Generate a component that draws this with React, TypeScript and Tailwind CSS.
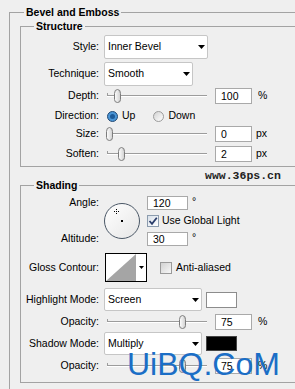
import { ReactNode } from 'react';

function Label({ children }: { children?: ReactNode }) {
  return <div className="w-[78px] mr-[5px] shrink-0 text-right">{children}</div>;
}

function Select({ value, width }: { value: string; width: string }) {
  return (
    <div
      className={`${width} h-full flex items-center justify-between bg-white border border-[#c6c6c6] rounded-[2px] pl-[3px] pr-[2px]`}
    >
      <span>{value}</span>
      <svg width="7" height="4" viewBox="0 0 7 4">
        <path d="M0 0h7L3.5 4z" fill="#000" />
      </svg>
    </div>
  );
}

function Field({ value, small }: { value: string; small?: boolean }) {
  return (
    <div
      className={
        small
          ? 'w-[41px] h-[14px] flex items-center bg-white border border-[#a9a9a9] pl-[5px] leading-none'
          : 'w-[37px] h-[16px] flex items-center bg-white border border-[#a9a9a9] pl-[5px] leading-none'
      }
    >
      {value}
    </div>
  );
}

function Slider({ pos }: { pos: number }) {
  return (
    <div className="relative ml-[1px] w-[102px] h-full">
      <div className="absolute left-[2px] right-0 top-[7px] h-[2px] border-t border-[#9c9c9c] border-b border-b-white" />
      <div className="absolute left-[2px] top-[5px] h-[3px] border-l border-[#9c9c9c]" />
      <svg
        className="absolute top-[1px]"
        style={{ left: pos }}
        width="9"
        height="14"
        viewBox="0 0 9 14"
      >
        <defs>
          <linearGradient id={`g${pos}`} x1="0" y1="0" x2="1" y2="0">
            <stop offset="0" stopColor="#ffffff" />
            <stop offset="1" stopColor="#cfcfcf" />
          </linearGradient>
        </defs>
        <path
          d="M1.5 4.5Q1.5 0.5 4.5 0.5Q7.5 0.5 7.5 4.5V10.5Q7.5 13.5 4.5 13.5Q1.5 13.5 1.5 10.5Z"
          fill={`url(#g${pos})`}
          stroke="#7c7c7c"
        />
      </svg>
    </div>
  );
}

function Legend({ children, outer }: { children: ReactNode; outer?: boolean }) {
  return (
    <legend
      className={
        outer
          ? 'ml-[14px] px-[2px] font-bold leading-[14px]'
          : 'ml-[13px] px-[2px] font-bold leading-[14px]'
      }
    >
      {children}
    </legend>
  );
}

export default function App() {
  return (
    <div className="relative w-[295px] h-[389px] overflow-hidden bg-[#efefef] text-[10.5px] text-black font-['Liberation_Sans',Arial,sans-serif]">
      <fieldset className="ml-[9px] mt-[5px] w-[320px] border border-[#a3a3a3] pb-[20px]">
        <Legend outer>Bevel and Emboss</Legend>

        <fieldset className="ml-[10px] w-[300px] border border-[#a3a3a3] pt-[2px] pb-[4px]">
          <Legend>Structure</Legend>
          <div className="flex items-center h-[24px]">
            <Label>Style:</Label>
            <Select value="Inner Bevel" width="w-[104px]" />
          </div>
          <div className="flex items-center h-[24px] mt-[3px]">
            <Label>Technique:</Label>
            <Select value="Smooth" width="w-[89px]" />
          </div>
          <div className="flex items-center h-[16px] mt-[2px]">
            <Label>Depth:</Label>
            <Slider pos={8} />
            <div className="ml-[8px]">
              <Field value="100" />
            </div>
            <span className="ml-[6px]">%</span>
          </div>
          <div className="flex items-center h-[16px] mt-[4px]">
            <Label>Direction:</Label>
            <span className="ml-[3px] w-[11px] h-[11px] rounded-full border border-[#234a74] bg-[#4a95d6] flex items-center justify-center">
              <span className="w-[5px] h-[5px] rounded-full bg-[#1c5a98]" />
            </span>
            <span className="ml-[4px]">Up</span>
            <span className="ml-[18px] w-[11px] h-[11px] rounded-full border border-[#9c9c9c] bg-gradient-to-br from-[#d2d2d2] to-white" />
            <span className="ml-[4px]">Down</span>
          </div>
          <div className="flex items-center h-[16px] mt-[2px]">
            <Label>Size:</Label>
            <Slider pos={0} />
            <div className="ml-[8px]">
              <Field value="0" />
            </div>
            <span className="ml-[4px]">px</span>
          </div>
          <div className="flex items-center h-[16px] mt-[4px]">
            <Label>Soften:</Label>
            <Slider pos={12} />
            <div className="ml-[8px]">
              <Field value="2" />
            </div>
            <span className="ml-[4px]">px</span>
          </div>
        </fieldset>

        <fieldset className="ml-[10px] mt-[11px] w-[300px] border border-[#a3a3a3] pt-[3px] pb-[8px]">
          <Legend>Shading</Legend>
          <div className="grid grid-cols-[78px_48px_auto] grid-rows-[16px_16px_16px] gap-y-[2px]">
            <div className="col-start-1 row-start-1 flex items-center justify-end">Angle:</div>
            <div className="col-start-2 row-start-1 row-span-3 flex items-center">
              <div className="relative ml-[5px] w-[36px] h-[36px] rounded-full border-[1.5px] border-[#4a5766] bg-gradient-to-br from-white to-[#e6e6e6]">
                <div className="absolute left-[9px] top-[5px] w-[5px] h-[5px] flex items-center justify-center">
                  <div className="absolute w-[5px] h-px border-t border-dotted border-black" />
                  <div className="absolute h-[5px] w-px border-l border-dotted border-black" />
                </div>
                <div className="absolute left-[16px] top-[16px] w-[2px] h-[2px] bg-black" />
              </div>
            </div>
            <div className="col-start-3 row-start-1 flex items-center">
              <Field value="120" small />
              <span className="ml-[4px] self-start -mt-[1px]">°</span>
            </div>
            <div className="col-start-3 row-start-2 flex items-center">
              <span className="w-[12px] h-[12px] border border-[#8c9cae] bg-gradient-to-br from-[#d9e1ea] to-white flex items-center justify-center">
                <svg width="10" height="10" viewBox="0 0 10 10">
                  <path d="M1.5 5L4 7.8L8.8 1.8" fill="none" stroke="#2b3d6a" strokeWidth="1.8" />
                </svg>
              </span>
              <span className="ml-[3px]">Use Global Light</span>
            </div>
            <div className="col-start-1 row-start-3 flex items-center justify-end">Altitude:</div>
            <div className="col-start-3 row-start-3 flex items-center">
              <Field value="30" small />
              <span className="ml-[4px] self-start -mt-[1px]">°</span>
            </div>
          </div>

          <div className="flex items-center h-[29px] mt-[6px]">
            <Label>Gloss Contour:</Label>
            <div className="ml-[1px] w-[42px] h-full flex border border-black bg-white">
              <svg width="30" height="27" viewBox="0 0 30 27">
                <path d="M0 27L30 0V27Z" fill="#a5a5a5" />
              </svg>
              <div className="flex-1 flex items-center justify-center">
                <svg width="5" height="3" viewBox="0 0 5 3">
                  <path d="M0 0h5L2.5 3z" fill="#000" />
                </svg>
              </div>
            </div>
            <span className="ml-[13px] w-[12px] h-[12px] border border-[#9a9a9a] bg-gradient-to-br from-[#d2d2d2] to-[#f8f8f8]" />
            <span className="ml-[4px]">Anti-aliased</span>
          </div>

          <div className="flex items-center h-[23px] mt-[6px]">
            <Label>Highlight Mode:</Label>
            <Select value="Screen" width="w-[98px]" />
            <div className="ml-[4px] w-[31px] h-[16px] border border-[#8c8c8c] bg-white" />
          </div>
          <div className="flex items-center h-[16px] mt-[3px]">
            <Label>Opacity:</Label>
            <Slider pos={73} />
            <div className="ml-[8px]">
              <Field value="75" />
            </div>
            <span className="ml-[6px]">%</span>
          </div>
          <div className="flex items-center h-[23px] mt-[2px]">
            <Label>Shadow Mode:</Label>
            <Select value="Multiply" width="w-[98px]" />
            <div className="ml-[4px] w-[31px] h-[15px] border border-[#444] bg-black" />
          </div>
          <div className="flex items-center h-[16px] mt-[3px]">
            <Label>Opacity:</Label>
            <Slider pos={73} />
            <div className="ml-[8px]">
              <Field value="75" />
            </div>
            <span className="ml-[6px]">%</span>
          </div>
        </fieldset>
      </fieldset>

      <div className="absolute left-[205px] top-[170px] font-['Liberation_Mono',monospace] font-bold text-[11.5px] leading-[12px] text-[#1e1e1e]">
        www.36ps.cn
      </div>
      <div className="absolute left-[127px] top-[348px] font-['Liberation_Sans',Arial,sans-serif] text-[32px] leading-[32px] text-[#1b6ec6]">
        UiBQ.CoM
      </div>
    </div>
  );
}
